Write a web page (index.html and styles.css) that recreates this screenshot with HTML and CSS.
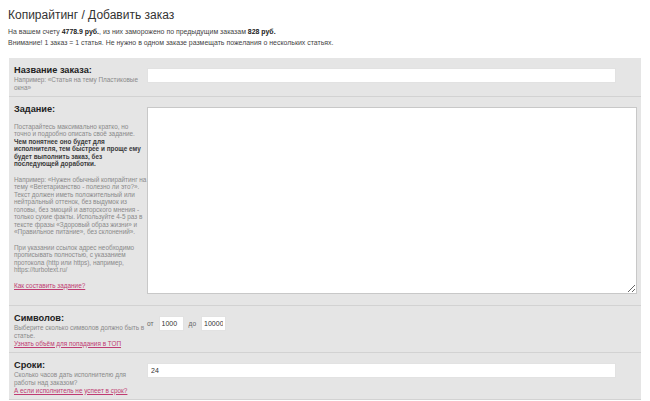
FILE: index.html
```html
<!DOCTYPE html>
<html lang="ru">
<head>
<meta charset="utf-8">
<title>Копирайтинг / Добавить заказ</title>
<link rel="stylesheet" href="styles.css">
</head>
<body>
<div class="page">
  <h1 class="title">Копирайтинг / Добавить заказ</h1>
  <p class="balance">На вашем счету <b>4778.9 руб.</b>, из них заморожено по предыдущим заказам <b>828 руб.</b></p>
  <p class="notice">Внимание! 1 заказ = 1 статья. Не нужно в одном заказе размещать пожелания о нескольких статьях.</p>

  <div class="form">
    <div class="row">
      <div class="label">
        <div class="label-title">Название заказа:</div>
        <div class="hint">Например: «Статья на тему Пластиковые окна»</div>
      </div>
      <div class="control">
        <input class="text-input" type="text">
      </div>
    </div>

    <div class="row">
      <div class="label label-tall">
        <div class="label-title">Задание:</div>
        <div class="hint hint-block">
          <p>Постарайтесь максимально кратко, но точно и подробно описать своё задание. <b class="strong-block">Чем понятнее оно будет для исполнителя, тем быстрее и проще ему будет выполнить заказ, без последующей доработки.</b></p>
          <p>Например: «Нужен обычный копирайтинг на тему «Вегетарианство - полезно ли это?». Текст должен иметь положительный или нейтральный оттенок, без выдумок из головы, без эмоций и авторского мнения - только сухие факты. Используйте 4-5 раз в тексте фразы «Здоровый образ жизни» и «Правильное питание», без склонений».</p>
          <p>При указании ссылок адрес необходимо прописывать полностью, с указанием протокола (http или https), например, https://turbotext.ru/</p>
          <p><a class="link" href="#">Как составить задание?</a></p>
        </div>
      </div>
      <div class="control">
        <textarea class="textarea"></textarea>
      </div>
    </div>

    <div class="row">
      <div class="label">
        <div class="label-title">Символов:</div>
        <div class="hint">Выберите сколько символов должно быть в статье.</div>
        <a class="link" href="#">Узнать объём для попадания в ТОП</a>
      </div>
      <div class="control">
        <div class="range">
          <span class="range-word">от</span>
          <input class="num-input" type="text" value="1000">
          <span class="range-word">до</span>
          <input class="num-input" type="text" value="10000">
        </div>
      </div>
    </div>

    <div class="row">
      <div class="label">
        <div class="label-title">Сроки:</div>
        <div class="hint">Сколько часов дать исполнителю для работы над заказом?</div>
        <a class="link" href="#">А если исполнитель не успеет в срок?</a>
      </div>
      <div class="control">
        <input class="text-input" type="text" value="24">
      </div>
    </div>
  </div>
</div>
</body>
</html>
```

FILE: styles.css
```css
* { box-sizing: border-box; }

html, body {
  margin: 0;
  padding: 0;
  background: #ffffff;
}

body {
  font-family: "Liberation Sans", Arial, sans-serif;
  color: #333;
}

.page {
  padding: 7px 8px 0 8px;
}

.title {
  margin: 0 0 4px 0;
  font-size: 12px;
  line-height: 16px;
  font-weight: normal;
  color: #333;
}

.balance,
.notice {
  margin: 0;
  font-size: 6.95px;
  line-height: 10px;
  color: #444;
}

.balance b { color: #222; }

.notice {
  margin-top: 1px;
  margin-bottom: 10px;
}

.form {
  margin: 0 1px;
  background: #e5e5e5;
}

.row {
  display: grid;
  grid-template-columns: 133px 490px;
  padding: 0 4px 0 5px;
  border-bottom: 1px solid #d2d2d2;
}

.label {
  padding: 7px 0 5px 0;
}

.label-tall {
  padding-bottom: 16px;
}

.label-title {
  font-size: 9.2px;
  line-height: 11px;
  font-weight: bold;
  color: #222;
}

.hint {
  font-size: 6.4px;
  line-height: 7.5px;
  color: #8a8a8a;
}

.hint-block {
  margin-top: 7.5px;
}

.hint-block p {
  width: 132.5px;
  margin: 0 0 8px 0;
}

.hint-block p:last-child {
  margin: 7px 0 0 0;
}

.strong-block {
  display: block;
  color: #3a3a3a;
}

.link {
  display: block;
  width: fit-content;
  font-size: 6.4px;
  line-height: 7.5px;
  color: #c03c72;
  text-decoration: underline;
}

.label > .link {
  margin-top: 0.5px;
}

.control {
  padding: 10px 0 10px 0;
}

.text-input {
  display: block;
  width: 469px;
  height: 15px;
  border: 1px solid #e2e2e2;
  background: #fff;
  padding: 0 3px;
  font-family: "Liberation Sans", Arial, sans-serif;
  font-size: 7px;
  color: #333;
  outline: none;
}

.textarea {
  display: block;
  width: 490px;
  height: 187px;
  border: 1px solid #c8c8c8;
  background: #fff;
  margin: 0;
  padding: 2px;
  font-family: "Liberation Sans", Arial, sans-serif;
  font-size: 7px;
}

.range {
  display: flex;
  align-items: center;
  height: 15px;
}

.range-word {
  font-size: 6.6px;
  color: #666;
}

.range-word:first-child {
  margin-right: 5px;
}

.num-input {
  width: 25px;
  height: 15px;
  border: 1px solid #e2e2e2;
  background: #fff;
  padding: 0 2px;
  font-family: "Liberation Sans", Arial, sans-serif;
  font-size: 7px;
  color: #333;
  outline: none;
}

.num-input + .range-word {
  margin: 0 5px 0 5px;
}
```
